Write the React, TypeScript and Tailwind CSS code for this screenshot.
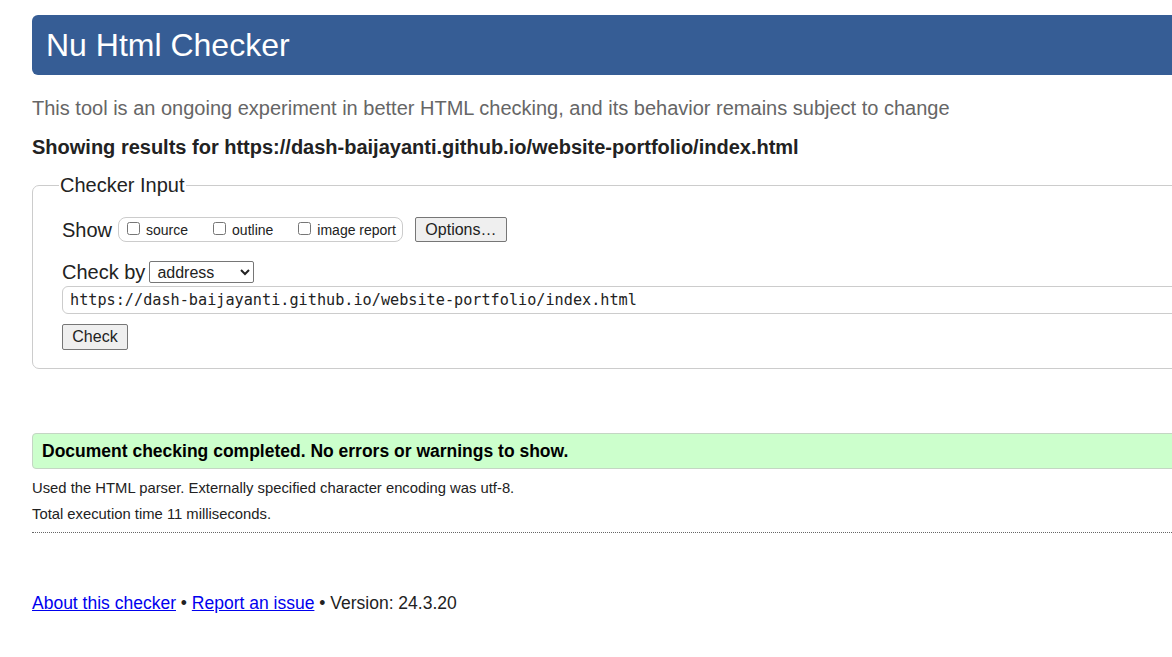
import { useState } from "react";

const App = () => {
  const [url, setUrl] = useState("https://dash-baijayanti.github.io/website-portfolio/index.html");

  return (
    <div className="w-[1172px] h-[657px] overflow-hidden bg-white font-['Liberation_Sans',Arial,sans-serif] text-[#222]">
      <div className="w-[1240px] pl-[32px] pt-[15px]">
        {/* Title bar */}
        <h1 className="h-[60px] rounded-[6px] bg-[#365d95] pl-[14px] text-[32px] leading-[60px] text-white">
          Nu Html Checker
        </h1>

        <p className="mt-[21px] text-[20px] leading-[24px] text-[#666]">
          This tool is an ongoing experiment in better HTML checking, and its behavior remains subject to change
        </p>
        <p className="mt-[15px] text-[20px] font-bold leading-[24px] text-[#222]">
          Showing results for https://dash-baijayanti.github.io/website-portfolio/index.html
        </p>

        {/* Checker input */}
        <fieldset className="mt-[14px] h-[196px] rounded-[7px] border border-[#ccc] pl-[29px]">
          <legend className="ml-[-3px] px-[1px] text-[20px] leading-[24px] text-[#222]">Checker Input</legend>

          <div className="mt-[20px] flex items-center">
            <span className="text-[20px] leading-[24px]">Show</span>
            <div className="ml-[6px] flex h-[25px] items-center rounded-[8px] border border-[#ccc] pl-[8px] pr-[6px] text-[14px]">
              <label className="flex items-center">
                <input type="checkbox" className="mb-[2px] h-[13px] w-[13px]" />
                <span className="ml-[6px] mt-[2px]">source</span>
              </label>
              <label className="ml-[25px] flex items-center">
                <input type="checkbox" className="mb-[2px] h-[13px] w-[13px]" />
                <span className="ml-[6px] mt-[2px]">outline</span>
              </label>
              <label className="ml-[25px] flex items-center">
                <input type="checkbox" className="mb-[2px] h-[13px] w-[13px]" />
                <span className="ml-[6px] mt-[2px]">image report</span>
              </label>
            </div>
            <button className="ml-[12px] h-[25px] w-[92px] rounded-[2px] border border-[#767676] bg-[#efefef] text-[16px] leading-[22px]">
              Options…
            </button>
          </div>

          <div className="mt-[18px] flex h-[24px] items-center">
            <span className="text-[20px] leading-[24px]">Check by</span>
            <select className="ml-[4px] h-[22px] w-[105px] rounded-[2px] border border-[#767676] bg-white pl-[3px] text-[16px] leading-[20px]">
              <option>address</option>
            </select>
          </div>

          <input
            value={url}
            onChange={(e) => setUrl(e.target.value)}
            className="mt-[2px] block h-[28px] w-[1160px] rounded-[6px] border border-[#ccc] pl-[7px] font-['DejaVu_Sans_Mono',monospace] text-[15.2px] text-[#222] outline-none"
          />

          <button className="mt-[10px] h-[26px] w-[66px] rounded-[2px] border border-[#767676] bg-[#efefef] text-[16px] leading-[22px]">
            Check
          </button>
        </fieldset>

        {/* Result */}
        <div className="mt-[64px] h-[36px] rounded-l-[4px] border border-[#c4d6c4] bg-[#ccffcc] pl-[9px] text-[17.5px] font-bold leading-[34px] text-black">
          Document checking completed. No errors or warnings to show.
        </div>

        <p className="mt-[11px] text-[14.8px] leading-[17px] text-[#222]">
          Used the HTML parser. Externally specified character encoding was utf-8.
        </p>
        <p className="mt-[9px] text-[14.8px] leading-[17px] text-[#222]">Total execution time 11 milliseconds.</p>
        <div className="mt-[9px] border-b border-dotted border-[#666]" />

        {/* Footer */}
        <p className="mt-[59px] text-[17.5px] leading-[22px] text-[#222]">
          <a href="#" className="text-[#0000ee] underline">About this checker</a>
          {" • "}
          <a href="#" className="text-[#0000ee] underline">Report an issue</a>
          {" • Version: 24.3.20"}
        </p>
      </div>
    </div>
  );
};

export default App;
